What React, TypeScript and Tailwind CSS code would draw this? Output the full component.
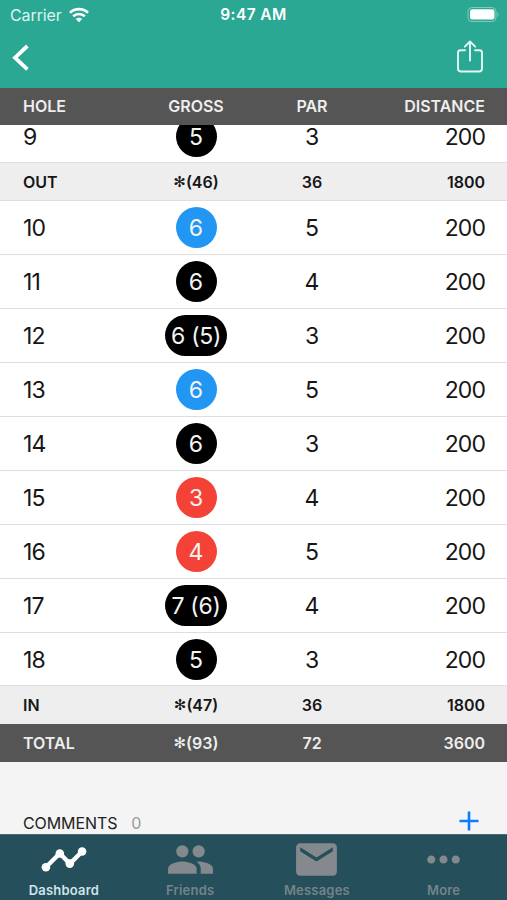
import type { ReactNode } from "react";
import clsx from "clsx";
import { MdEmail, MdMoreHoriz } from "react-icons/md";

type Hole = {
  hole: number;
  gross: string;
  color: "blue" | "black" | "red";
  par: number;
  distance: number;
};

const holes: Hole[] = [
  { hole: 10, gross: "6", color: "blue", par: 5, distance: 200 },
  { hole: 11, gross: "6", color: "black", par: 4, distance: 200 },
  { hole: 12, gross: "6 (5)", color: "black", par: 3, distance: 200 },
  { hole: 13, gross: "6", color: "blue", par: 5, distance: 200 },
  { hole: 14, gross: "6", color: "black", par: 3, distance: 200 },
  { hole: 15, gross: "3", color: "red", par: 4, distance: 200 },
  { hole: 16, gross: "4", color: "red", par: 5, distance: 200 },
  { hole: 17, gross: "7 (6)", color: "black", par: 4, distance: 200 },
  { hole: 18, gross: "5", color: "black", par: 3, distance: 200 },
];

const colors = {
  blue: "bg-[#2196f3]",
  black: "bg-black",
  red: "bg-[#f44336]",
};

const columns = "grid shrink-0 grid-cols-[115px_116px_116px_115px] items-center pl-[23px] pr-[22px]";

function HoleRow({ row }: { row: Hole }) {
  return (
    <div
      className={clsx(
        columns,
        "h-[53.94px] border-b border-[#dedede] bg-white pt-[1px] text-[23px] leading-[20px] tracking-[-0.9px] text-[#161616]"
      )}
    >
      <div className="pt-[1px]">{row.hole}</div>
      <div className="flex justify-center">
        <span
          className={clsx(
            "flex h-[41px] items-center justify-center rounded-full pt-[1px] text-[#f4f4f4]",
            row.gross.length > 1 ? "w-[62px] tracking-[-0.3px]" : "w-[41px] tracking-normal",
            colors[row.color]
          )}
        >
          {row.gross}
        </span>
      </div>
      <div className="pt-[1px] text-center tracking-normal">{row.par}</div>
      <div className="pt-[1px] text-right">{row.distance}</div>
    </div>
  );
}

function SummaryRow({ cells, className }: { cells: ReactNode[]; className: string }) {
  return (
    <div className={clsx(columns, "text-[16px] leading-none", className)}>
      <div>{cells[0]}</div>
      <div className="text-center">{cells[1]}</div>
      <div className="text-center">{cells[2]}</div>
      <div className="text-right">{cells[3]}</div>
    </div>
  );
}

function Score({ value }: { value: number }) {
  return (
    <span className="flex items-center justify-center whitespace-nowrap">
      <span className="font-['DejaVu_Sans'] text-[15px] font-bold leading-[14px]">✻</span>
      <span>({value})</span>
    </span>
  );
}

function StatusBar() {
  return (
    <div className="grid h-[29px] grid-cols-3 items-center pl-[10px] pr-[8px] text-[16px] text-white">
      <div className="flex items-center gap-[7px] text-[#dcf5f0]">
        <span className="tracking-[-0.1px]">Carrier</span>
        <svg width="20" height="16" viewBox="0 0 20 16" className="fill-none stroke-white" strokeWidth="2.7">
          <path d="M1 5.8C6 .9 14 .9 19 5.8" />
          <path d="M4.2 9.3C7.5 6.2 12.5 6.2 15.8 9.3" />
          <path d="M10 15.3 6.8 12.1Q10 9.3 13.2 12.1Z" className="fill-white stroke-none" />
        </svg>
      </div>
      <div className="pr-[2px] pt-[1px] text-center text-[15.5px] font-semibold tracking-[0.4px]">9:47 AM</div>
      <div className="flex justify-end">
        <svg width="32" height="16" viewBox="0 0 32 16">
          <rect x="1" y="0.5" width="28" height="14" rx="4" className="fill-none stroke-[#7fcbbd]" />
          <rect x="3" y="2.3" width="24.5" height="10.3" rx="2.4" className="fill-white" />
          <path d="M30.5 5Q32.5 7.5 30.5 10Z" className="fill-[#7fcbbd]" />
        </svg>
      </div>
    </div>
  );
}

function NavBar() {
  return (
    <div className="flex h-[58.5px] items-center justify-between pl-[12px] pr-[23px] text-white">
      <svg width="18" height="28" viewBox="0 0 18 28" className="fill-none stroke-white" strokeWidth="3.8">
        <path d="M15.4 2 3 13.7 15.4 25.4" />
      </svg>
      <svg
        width="28"
        height="34"
        viewBox="0 0 28 34"
        className="mb-[2px] fill-none stroke-[#e2f8f4]"
        strokeWidth="1.9"
        strokeLinecap="round"
        strokeLinejoin="round"
      >
        <path d="M9 10.3H4.5Q2 10.3 2 12.8V28.5Q2 31.5 5 31.5H23Q26 31.5 26 28.5V12.8Q26 10.3 23.5 10.3H19" />
        <path d="M14 20.5V1.5M8.8 6.7 14 1.5 19.2 6.7" />
      </svg>
    </div>
  );
}

function DashboardIcon({ size }: { size: number }) {
  return (
    <svg width={size} height={size} viewBox="0 0 49 49" fill="currentColor">
      <path d="M6.9 32.3 20.8 18.3 30.8 28.8 43.1 16.5" fill="none" stroke="currentColor" strokeWidth="4.4" />
      <circle cx="6.9" cy="32.3" r="4.3" />
      <circle cx="20.8" cy="18.5" r="4.3" />
      <circle cx="30.8" cy="28.6" r="4.3" />
      <circle cx="43.1" cy="16.5" r="4.3" />
    </svg>
  );
}

function FriendsIcon({ size }: { size: number }) {
  return (
    <svg width={size} height={size} viewBox="0 0 24 24" fill="currentColor">
      <circle cx="8" cy="8" r="3" />
      <circle cx="16" cy="8" r="3" />
      <path d="M8 13c-2.33 0-7 1.17-7 3.5V19h14v-2.5c0-2.33-4.67-3.5-7-3.5z" />
      <path d="M16 13c-.29 0-.62.02-.97.05 1.16.84 1.97 1.97 1.97 3.45V19h6v-2.5c0-2.33-4.67-3.5-7-3.5z" />
    </svg>
  );
}

const tabs = [
  { label: "Dashboard", icon: DashboardIcon, active: true },
  { label: "Friends", icon: FriendsIcon },
  { label: "Messages", icon: MdEmail },
  { label: "More", icon: MdMoreHoriz },
];

function TabBar() {
  return (
    <div className="grid h-[66.5px] shrink-0 grid-cols-4 border-t border-[#4a6a75] bg-[#254f5b]">
      {tabs.map((tab) => (
        <div
          key={tab.label}
          className={clsx(
            "flex flex-col items-center text-[13px] font-semibold leading-[12px] tracking-[0.2px]",
            tab.active ? "pl-[1px] text-white" : "text-[#84898d]"
          )}
        >
          <tab.icon size={49} />
          <span className={tab.active ? "text-[#cfe4ec]" : "text-[#748389]"}>{tab.label}</span>
        </div>
      ))}
    </div>
  );
}

export default function App() {
  return (
    <div className="flex h-[900px] w-[507px] flex-col overflow-hidden bg-[#f4f4f4] font-[Inter,sans-serif]">
      <div className="h-[87.5px] shrink-0 bg-[#2ba894]">
        <StatusBar />
        <NavBar />
      </div>

      <SummaryRow
        cells={["HOLE", "GROSS", "PAR", "DISTANCE"]}
        className="h-[37.5px] bg-[#555] font-semibold text-[#eee]"
      />

      {/* scrolled list, hole 9 is half hidden under the header */}
      <div className="flex h-[38px] shrink-0 flex-col justify-end overflow-hidden">
        <HoleRow row={{ hole: 9, gross: "5", color: "black", par: 3, distance: 200 }} />
      </div>
      <SummaryRow
        cells={["OUT", <Score value={46} />, 36, 1800]}
        className="h-[38px] border-b border-[#dedede] bg-[#eee] font-semibold text-[#161616]"
      />
      {holes.map((row) => (
        <HoleRow key={row.hole} row={row} />
      ))}
      <SummaryRow
        cells={["IN", <Score value={47} />, 36, 1800]}
        className="h-[37.5px] bg-[#eee] font-semibold text-[#161616]"
      />
      <SummaryRow
        cells={["TOTAL", <Score value={93} />, 72, 3600]}
        className="h-[38px] bg-[#555] font-semibold text-[#eee]"
      />

      <div className="flex flex-1 items-end justify-between pl-[23px] pr-[28px]">
        <div className="flex gap-[14px] text-[16px] leading-[21px] tracking-[-0.1px] text-[#222]">
          <span>COMMENTS</span>
          <span className="text-[#999]">0</span>
        </div>
        <svg width="20" height="20" viewBox="0 0 20 20" className="mb-[3px] fill-none stroke-[#0a7cff]" strokeWidth="2.6">
          <path d="M10 .5V19.5M.5 10H19.5" />
        </svg>
      </div>

      <TabBar />
    </div>
  );
}
